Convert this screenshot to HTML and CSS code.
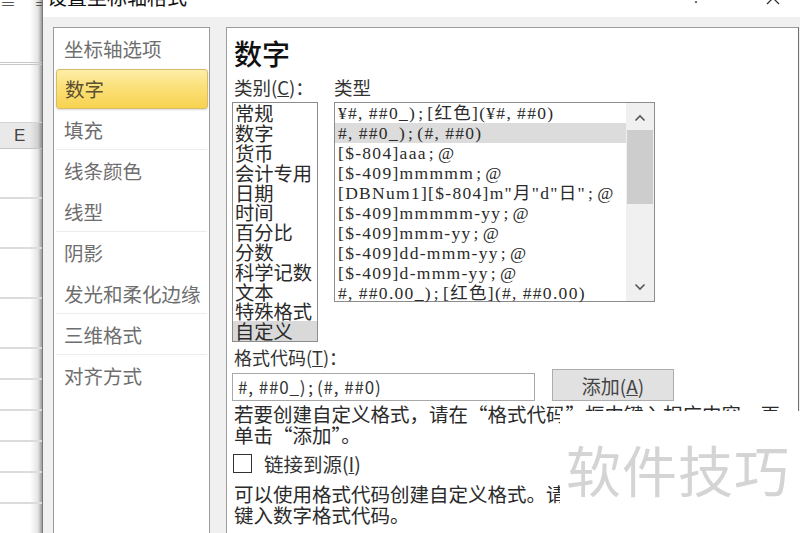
FILE: index.html
```html
<!DOCTYPE html>
<html lang="zh-CN">
<head>
<meta charset="utf-8">
<title>设置坐标轴格式</title>
<link rel="stylesheet" href="styles.css">
</head>
<body>
<div class="screen">
  <div class="sheet">
    <div class="sheet-top"><span class="menu-ico">≡</span><span class="menu-ico">≡</span></div>
    <div class="sheet-ribbon"></div>
    <div class="sheet-formula"></div>
    <div class="col-head">E</div>
    <div class="cell tall"></div>
    <div class="cell tall"></div>
    <div class="cell tall"></div>
    <div class="cell tall"></div>
    <div class="cell mid"></div>
    <div class="cell mid"></div>
    <div class="cell short"></div>
    <div class="cell short"></div>
    <div class="cell short"></div>
  </div>
  <div class="dialog">
    <div class="titlebar">
      <span class="title">设置坐标轴格式</span>
      <span class="help">?</span>
      <svg class="close" width="16" height="10" viewBox="0 0 16 10"><path d="M2 -6 L14 6 M14 -6 L2 6" stroke="#333" stroke-width="1.3" fill="none"/></svg>
    </div>
    <div class="dlg-body">
      <nav class="nav">
        <div class="nav-item">坐标轴选项</div>
        <div class="nav-item active">数字</div>
        <div class="nav-item sep">填充</div>
        <div class="nav-item">线条颜色</div>
        <div class="nav-item sep">线型</div>
        <div class="nav-item">阴影</div>
        <div class="nav-item sep">发光和柔化边缘</div>
        <div class="nav-item sep">三维格式</div>
        <div class="nav-item">对齐方式</div>
      </nav>
      <section class="panel">
        <h1 class="heading">数字</h1>
        <div class="labels">
          <span class="lbl-cat">类别(<u>C</u>)：</span>
          <span class="lbl-type">类型</span>
        </div>
        <div class="lists">
          <ul class="cat-list">
            <li>常规</li>
            <li>数字</li>
            <li>货币</li>
            <li>会计专用</li>
            <li>日期</li>
            <li>时间</li>
            <li>百分比</li>
            <li>分数</li>
            <li>科学记数</li>
            <li>文本</li>
            <li>特殊格式</li>
            <li class="sel">自定义</li>
          </ul>
          <div class="type-list">
            <ul class="type-items">
              <li>¥#<span class="p">,</span>##0_)<span class="s">;</span>[红色](¥#<span class="p">,</span>##0)</li>
              <li class="sel">#<span class="p">,</span>##0_)<span class="s">;</span>(#<span class="p">,</span>##0)</li>
              <li>[$-804]aaa<span class="s">;</span>@</li>
              <li>[$-409]mmmmm<span class="s">;</span>@</li>
              <li>[DBNum1][$-804]m"月"d"日"<span class="s">;</span>@</li>
              <li>[$-409]mmmmm-yy<span class="s">;</span>@</li>
              <li>[$-409]mmm-yy<span class="s">;</span>@</li>
              <li>[$-409]dd-mmm-yy<span class="s">;</span>@</li>
              <li>[$-409]d-mmm-yy<span class="s">;</span>@</li>
              <li>#<span class="p">,</span>##0.00_)<span class="s">;</span>[红色](#<span class="p">,</span>##0.00)</li>
            </ul>
            <div class="scrollbar">
              <svg class="arrow" width="12" height="8" viewBox="0 0 12 8"><path d="M1.5 6.5 L6 2 L10.5 6.5" stroke="#555" stroke-width="1.6" fill="none"/></svg>
              <div class="track"><div class="thumb"></div></div>
              <svg class="arrow" width="12" height="8" viewBox="0 0 12 8"><path d="M1.5 1.5 L6 6 L10.5 1.5" stroke="#555" stroke-width="1.6" fill="none"/></svg>
            </div>
          </div>
        </div>
        <div class="code-label">格式代码(<u>T</u>)：</div>
        <div class="code-row">
          <div class="code-input">#<span class="p">,</span>##0_)<span class="s">;</span>(#<span class="p">,</span>##0)</div>
          <button class="add-btn">添加(<u>A</u>)</button>
        </div>
        <p class="desc">若要创建自定义格式，请在“格式代码”框中键入相应内容，再<br>单击“添加”。</p>
        <label class="check-row"><span class="checkbox"></span><span>链接到源(<u>I</u>)</span></label>
        <p class="desc note">可以使用格式代码创建自定义格式。请在“格式代码”框中<br>键入数字格式代码。</p>
      </section>
    </div>
  </div>
  <div class="watermark">软件技巧</div>
</div>
</body>
</html>
```
FILE: styles.css
```css
html, body {
  margin: 0;
  padding: 0;
  background: #ffffff;
}
body {
  width: 800px;
  height: 533px;
  overflow: hidden;
  font-family: "Noto Sans CJK SC", "Noto Sans", sans-serif;
}
.screen {
  position: relative;
  display: flex;
  width: 800px;
  height: 533px;
  overflow: hidden;
}

/* Excel sheet strip on the left */
.sheet {
  width: 42px;
  flex: none;
  display: flex;
  flex-direction: column;
  background: linear-gradient(to right, #ffffff 0, #ffffff 30px, #e4e4e4 38px, #9a9a9a 42px);
}
.sheet-top {
  height: 10px;
  display: flex;
  gap: 18px;
  overflow: hidden;
}
.menu-ico {
  font-size: 16px;
  line-height: 10px;
  margin-top: -4px;
  color: #555;
}
.sheet-ribbon {
  height: 52px;
  border-bottom: 3px double #c8c8c8;
}
.sheet-formula {
  height: 57px;
}
.col-head {
  height: 25px;
  background: linear-gradient(to right, #e9e9e9 0, #e9e9e9 30px, #cfcfcf 38px, #8f8f8f 42px);
  border-top: 1px solid #d4d4d4;
  border-bottom: 1px solid #c4c4c4;
  color: #444;
  font-family: "Liberation Sans", sans-serif;
  font-size: 17px;
  line-height: 25px;
  padding-left: 14px;
}
.cell {
  border-bottom: 2px solid #dcdcdc;
  flex: none;
}
.cell.tall { height: 48px; }
.cell.mid { height: 29px; }
.cell.short { height: 29px; }

/* Dialog */
.dialog {
  flex: 1;
  display: flex;
  flex-direction: column;
  border-left: 1px solid #7a7a7a;
  background: #f0f0f0;
}
.titlebar {
  height: 17px;
  background: #ffffff;
  display: flex;
  align-items: flex-start;
  overflow: hidden;
}
.title {
  font-size: 20px;
  line-height: 24px;
  margin-top: -15px;
  margin-left: 4px;
  color: #111;
}
.help {
  margin-left: auto;
  font-size: 17px;
  line-height: 20px;
  margin-top: -12px;
  color: #333;
  font-family: "Liberation Sans", sans-serif;
}
.close {
  margin-left: 64px;
  margin-right: 19px;
  margin-top: -2px;
}
.dlg-body {
  flex: 1;
  display: flex;
  gap: 16px;
  padding: 10px 0 0 10px;
}

/* Navigation */
.nav {
  width: 155px;
  flex: none;
  background: #ffffff;
  border: 1px solid #9c9c9c;
  border-bottom: none;
  display: flex;
  flex-direction: column;
}
.nav-item {
  height: 41px;
  line-height: 41px;
  padding-left: 10px;
  font-size: 19.5px;
  color: #6e6e6e;
  box-sizing: border-box;
  white-space: nowrap;
}
.nav-item.sep {
  border-bottom: 1px solid #ececec;
  margin: 0 2px;
  padding-left: 8px;
}
.nav-item.active {
  margin: 0 1px 0 2px;
  padding-left: 8px;
  line-height: 38px;
  height: 40px;
  background: linear-gradient(to bottom, #fdeea8 0%, #fbe07a 45%, #f8d350 100%);
  border: 1px solid #d9bc6a;
  border-radius: 3px;
  color: #5c4f30;
  box-shadow: 0 1px 2px rgba(0,0,0,0.15);
}

/* Right panel */
.panel {
  flex: 1;
  background: #ffffff;
  border: 1px solid #9c9c9c;
  border-right: 1px solid #6f6f6f;
  border-bottom: none;
  margin-right: 1px;
  padding: 10px 0 0 5px;
  color: #222;
}
.heading {
  margin: 0;
  padding-left: 2px;
  font-size: 28px;
  line-height: 31px;
  font-weight: 500;
  color: #111;
}
.labels {
  margin-top: 8px;
  height: 20px;
  line-height: 20px;
  font-size: 18.5px;
  color: #333;
  display: flex;
}
.lbl-cat {
  width: 100px;
  padding-left: 2px;
}
.lists {
  margin-top: 5px;
  display: flex;
  gap: 16px;
  align-items: flex-start;
}
.cat-list {
  list-style: none;
  margin: 0;
  padding: 0;
  width: 84px;
  height: 238px;
  border: 1px solid #8c8c8c;
  display: flex;
  flex-direction: column;
  justify-content: flex-end;
  overflow: hidden;
}
.cat-list li {
  height: 19.8px;
  line-height: 20px;
  font-size: 19.3px;
  padding-left: 2px;
  color: #2a2a2a;
  white-space: nowrap;
}
.cat-list li.sel {
  background: #d9d9d9;
}
.type-list {
  width: 319px;
  height: 198px;
  border: 1px solid #8c8c8c;
  display: flex;
}
.type-items {
  list-style: none;
  margin: 0;
  padding: 0;
  flex: 1;
}
.type-items li {
  height: 20px;
  line-height: 20px;
  font-family: "Liberation Serif", "Noto Sans CJK SC", serif;
  font-size: 17.5px;
  padding-left: 3px;
  color: #2a2a2a;
  white-space: nowrap;
  overflow: hidden;
  letter-spacing: 1.3px;
}
.type-items li.sel {
  background: #dcdcdc;
}
.p {
  margin-right: 5px;
}
.s {
  margin: 0 3px 0 2px;
}
.scrollbar {
  width: 28px;
  flex: none;
  background: #f0f0f0;
  display: flex;
  flex-direction: column;
  align-items: center;
}
.arrow {
  margin: 11px 0 8px;
}
.arrow:last-child {
  margin: 8px 0 10px;
}
.track {
  flex: 1;
  width: 100%;
}
.thumb {
  width: 26px;
  margin-left: 1px;
  height: 74px;
  background: #cdcdcd;
}
.code-label {
  margin-top: 5px;
  height: 20px;
  line-height: 20px;
  font-size: 18px;
  padding-left: 2px;
  color: #333;
}
.code-row {
  margin-top: 2px;
  display: flex;
  align-items: flex-end;
  gap: 17px;
}
.code-input {
  width: 296px;
  height: 26px;
  line-height: 26px;
  border: 1px solid #a8a8a8;
  padding-left: 5px;
  font-size: 17px;
  color: #333;
  letter-spacing: 0.8px;
}
.add-btn {
  width: 122px;
  height: 32px;
  background: #e1e1e1;
  border: 1px solid #adadad;
  font-family: "Noto Sans CJK SC", sans-serif;
  font-size: 19px;
  color: #444;
  padding: 0;
}
.desc {
  margin: 2px 0 0;
  padding-left: 2px;
  font-size: 19.5px;
  line-height: 21px;
  color: #2a2a2a;
  white-space: nowrap;
}
.check-row {
  margin-top: 9px;
  display: flex;
  align-items: center;
  gap: 12px;
  height: 19px;
  font-size: 19.5px;
  color: #333;
  padding-left: 1px;
}
.checkbox {
  width: 17px;
  height: 17px;
  border: 1px solid #333;
  background: #fff;
}
.note {
  margin-top: 10px;
}

/* Watermark overlay */
.watermark {
  position: absolute;
  left: 560px;
  top: 411px;
  width: 240px;
  height: 122px;
  background: #ffffff;
  box-sizing: border-box;
  padding: 22px 0 0 6px;
  font-size: 55px;
  line-height: 70px;
  color: #d4d4d4;
  letter-spacing: 1px;
  white-space: nowrap;
}
```
